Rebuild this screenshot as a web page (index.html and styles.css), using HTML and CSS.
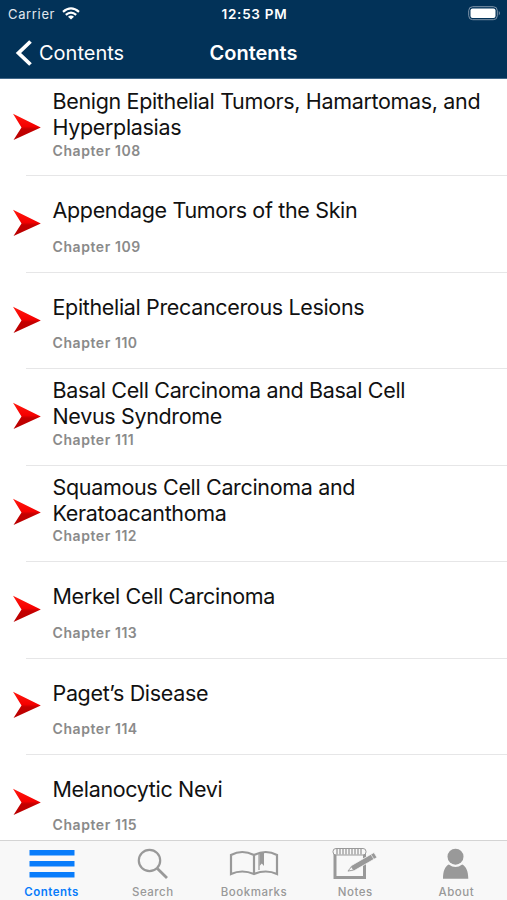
FILE: index.html
```html
<!DOCTYPE html>
<html lang="en">
<head>
<meta charset="utf-8">
<title>Contents</title>
<link rel="stylesheet" href="styles.css">
</head>
<body>
<svg width="0" height="0" class="defs">
  <defs>
    <linearGradient id="red" x1="0" y1="0" x2="0" y2="1">
      <stop offset="0" stop-color="#ff1a10"/><stop offset=".48" stop-color="#f50000"/>
      <stop offset=".58" stop-color="#c40000"/><stop offset="1" stop-color="#b80000"/>
    </linearGradient>
    <symbol id="arrow" viewBox="0 0 30 28"><path d="M1 .8 28.8 14.5 1.5 27 9.5 14.5Z" fill="url(#red)"/></symbol>
  </defs>
</svg>
<div class="app">
  <header>
    <div class="status">
      <div class="carrier"><span>Carrier</span>
        <svg width="18" height="13" viewBox="0 0 18 13" fill="none" stroke="#fff" stroke-width="2.2"><path d="M1 4.8Q9-2.1 17 4.8M3.8 7.8Q9 3.4 14.2 7.8"/><path d="M6 9.7Q9 7.3 12 9.7L9 12.6Z" fill="#fff" stroke="none"/></svg>
      </div>
      <div class="time">12:53 PM</div>
      <svg class="battery" width="33" height="15" viewBox="0 0 33 15"><rect x=".7" y=".7" width="28.6" height="13" rx="4" fill="none" stroke="#8095ab" stroke-width="1"/><rect x="2.5" y="2.5" width="25" height="9.5" rx="2" fill="#fff"/><path d="M30.8 5Q33 7.2 30.8 9.5Z" fill="#8095ab"/></svg>
    </div>
    <nav class="bar">
      <div class="back"><svg width="18" height="28" viewBox="0 0 18 28"><path d="M15.5 2.5 3.5 14 15.5 25.5" fill="none" stroke="#fff" stroke-width="3.8"/></svg><span>Contents</span></div>
      <h1>Contents</h1>
    </nav>
  </header>
  <main>
    <article><svg class="arrow"><use href="#arrow"/></svg><div class="body"><h2>Benign Epithelial Tumors, Hamartomas, and<br>Hyperplasias</h2><p>Chapter 108</p></div></article>
    <article><svg class="arrow"><use href="#arrow"/></svg><div class="body"><h2>Appendage Tumors of the Skin</h2><p>Chapter 109</p></div></article>
    <article><svg class="arrow"><use href="#arrow"/></svg><div class="body"><h2>Epithelial Precancerous Lesions</h2><p>Chapter 110</p></div></article>
    <article><svg class="arrow"><use href="#arrow"/></svg><div class="body"><h2>Basal Cell Carcinoma and Basal Cell<br>Nevus Syndrome</h2><p>Chapter 111</p></div></article>
    <article><svg class="arrow"><use href="#arrow"/></svg><div class="body"><h2>Squamous Cell Carcinoma and<br>Keratoacanthoma</h2><p>Chapter 112</p></div></article>
    <article><svg class="arrow"><use href="#arrow"/></svg><div class="body"><h2>Merkel Cell Carcinoma</h2><p>Chapter 113</p></div></article>
    <article><svg class="arrow"><use href="#arrow"/></svg><div class="body"><h2>Paget’s Disease</h2><p>Chapter 114</p></div></article>
    <article><svg class="arrow"><use href="#arrow"/></svg><div class="body"><h2>Melanocytic Nevi</h2><p>Chapter 115</p></div></article>
  </main>
  <footer>
    <div class="tab active"><svg width="50" height="36" viewBox="0 0 50 36"><path d="M2.5 5h45v5.5h-45zM2.5 16h45v5.5h-45zM2.5 27h45v5.5h-45z" fill="#087cfb"/></svg><span>Contents</span></div>
    <div class="tab"><svg width="50" height="36" viewBox="0 0 50 36" fill="none" stroke="#999" stroke-width="2.2"><circle cx="21.5" cy="15.5" r="10.7"/><path d="M29.3 23.5 39 33" stroke-width="2.8"/></svg><span>Search</span></div>
    <div class="tab"><svg width="50" height="36" viewBox="0 0 50 36" fill="none" stroke="#999" stroke-width="2.2"><path d="M25 10Q13 4 2 10V29Q13 24 25 29Q37 24 48 29V10Q37 4 25 10V29"/><path d="M30 8V25" stroke-width="1.2"/><path d="M30.5 8H35V21L32.8 18.5 30.5 21Z" fill="#999" stroke="none"/></svg><span>Bookmarks</span></div>
    <div class="tab"><svg width="50" height="36" viewBox="0 0 50 36"><path d="M5 9V32.5H34.5V8" fill="none" stroke="#999" stroke-width="3"/><rect x="3" y="3.5" width="33" height="6.5" rx="3" fill="#f8f8f8" stroke="#999"/><path d="M7 4v5.5M10 4v5.5M13 4v5.5M16 4v5.5M19 4v5.5M22 4v5.5M25 4v5.5M28 4v5.5M31 4v5.5" stroke="#999" stroke-width="1.3"/><path d="M17 27 21.5 20.5 44 7.5 47 12.5 24.5 25.5Z" fill="#999" stroke="#f8f8f8" stroke-width=".8"/><path d="M18 26 21.5 21.8 23.5 25Z" fill="#f8f8f8" stroke="#999" stroke-width=".8"/><path d="m41 9.5 3 5" stroke="#f8f8f8" stroke-width=".7"/></svg><span>Notes</span></div>
    <div class="tab"><svg width="50" height="36" viewBox="0 0 50 36" fill="#999"><circle cx="24.5" cy="11.7" r="8"/><path d="M12 33.7C12 26 14 21.5 17.8 19.5Q24.5 24.5 31.2 19.5C35 21.5 37.3 26 37.3 33.7Z"/></svg><span>About</span></div>
  </footer>
</div>
</body>
</html>
```
FILE: styles.css
```css
* { box-sizing: border-box; margin: 0; padding: 0; }
body { font-family: Inter, "Liberation Sans", sans-serif; background: #fff; overflow: hidden; }
svg { display: block; flex: none; }
.defs { position: absolute; }
.app { width: 507px; height: 900px; display: flex; flex-direction: column; }
header { height: 79px; flex: none; background: #023258; color: #fff; border-bottom: 1px solid #416788; }
.status { height: 27px; display: grid; grid-template-columns: 1fr auto 1fr; align-items: center; padding: 0 6px 0 8px; font-size: 13px; }
.carrier { display: flex; align-items: center; gap: 7px; letter-spacing: .65px; color: #e1e8ee; }
.time { font-size: 13.5px; font-weight: 600; letter-spacing: .75px; }
.battery { justify-self: end; }
.bar { height: 51px; display: grid; grid-template-columns: 1fr auto 1fr; align-items: center; padding: 0 15px; }
.back { display: flex; align-items: center; gap: 6px; font-size: 20px; }
h1 { font-size: 20px; font-weight: 600; }
main { flex: 1; min-height: 0; overflow: hidden; }
article { height: 96.43px; padding-left: 12px; display: flex; position: relative; }
article::after { content: ""; position: absolute; left: 26px; right: 0; bottom: -1px; height: 1px; background: #e6e6e7; }
.arrow { width: 30px; height: 28px; margin-top: 33.8px; }
.body { margin-left: 10.5px; padding-top: 9px; white-space: nowrap; }
h2 { height: 52px; display: flow-root; align-content: center; font-size: 21.5px; line-height: 26px; font-weight: 400; letter-spacing: -.34px; color: #111; }
p { margin-top: .5px; font-size: 14px; line-height: 20px; font-weight: 600; color: #8a8a8a; letter-spacing: .57px; }
footer { height: 60px; flex: none; display: grid; grid-template-columns: repeat(5, 1fr); background: #f8f8f8; border-top: 1px solid #d4d4d4; padding-left: 1px; }
.tab { display: flex; flex-direction: column; align-items: center; padding-top: 4px; font-size: 11.5px; font-weight: 500; color: #999; letter-spacing: .5px; }
.tab span { line-height: 14px; margin-top: 4px; }
.active { color: #087cfb; font-weight: 600; }
```
